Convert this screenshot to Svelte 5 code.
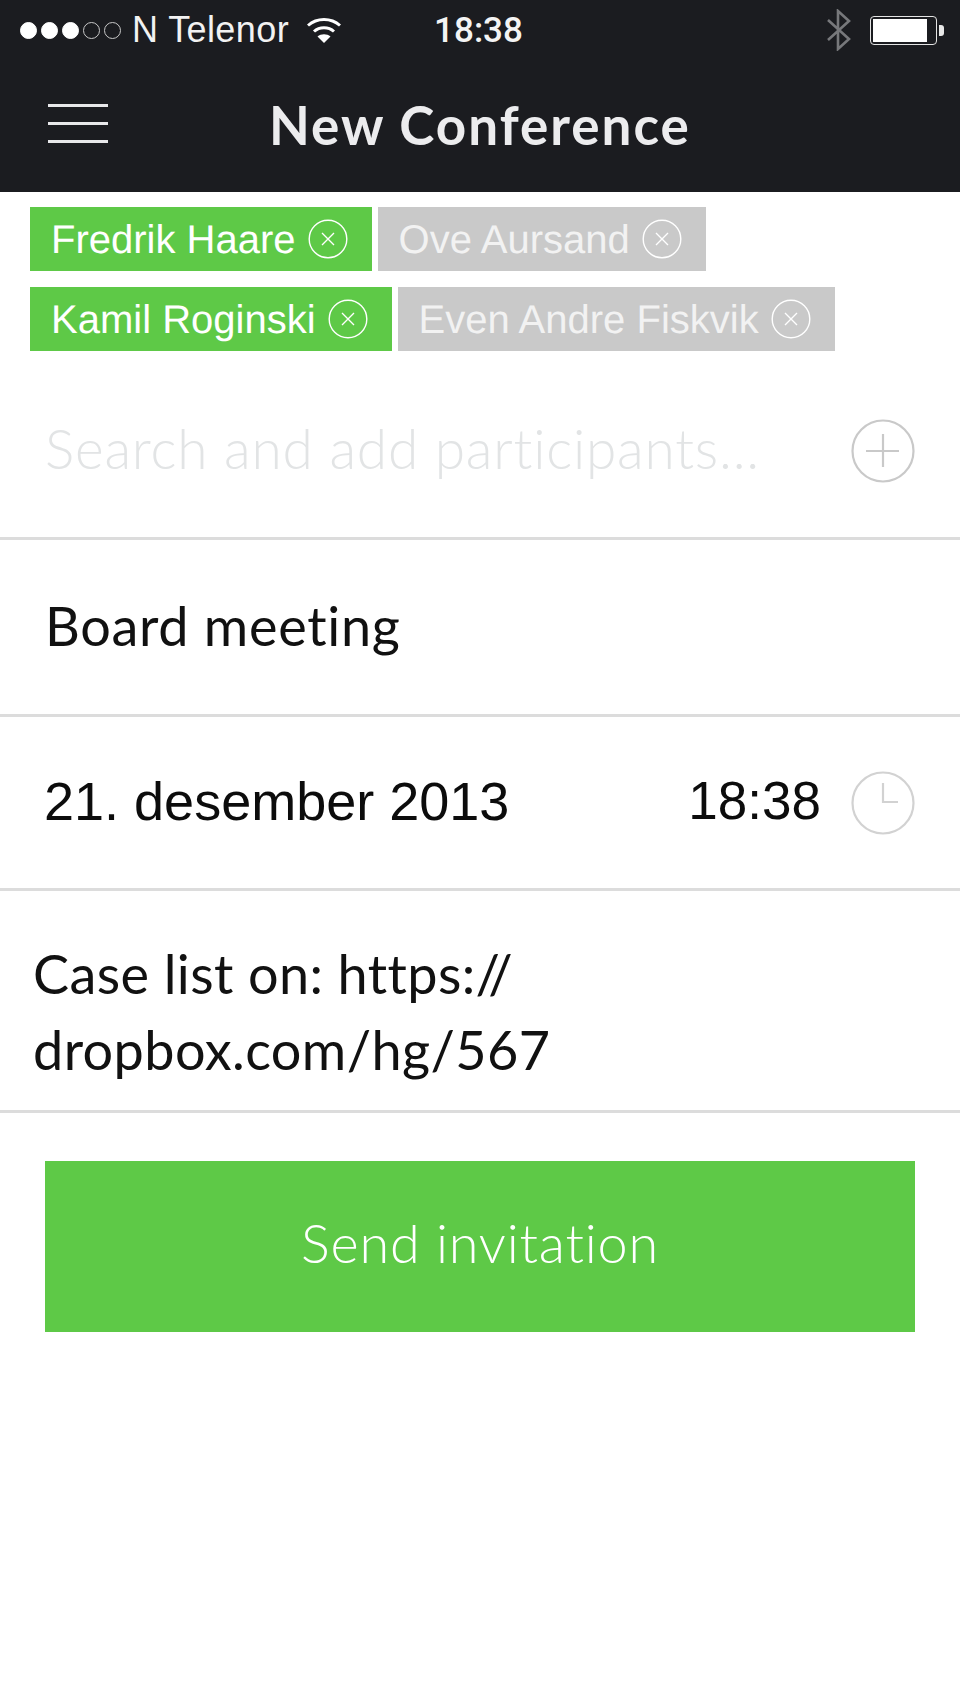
<script>
  const tags = [
    [
      { name: 'Fredrik Haare', active: true },
      { name: 'Ove Aursand', active: false }
    ],
    [
      { name: 'Kamil Roginski', active: true },
      { name: 'Even Andre Fiskvik', active: false }
    ]
  ];
  const dots = [true, true, true, false, false];
</script>

<div class="page">
  <header class="top">
    <div class="status">
      <div class="status-left">
        <span class="dots">
          {#each dots as on}
            <i class:on></i>
          {/each}
        </span>
        <span class="carrier">N Telenor</span>
        <svg class="wifi" width="36" height="28" viewBox="0 0 36 28">
          <path d="M2 9.5C11 1.5 25 1.5 34 9.5" fill="none" stroke="#fff" stroke-width="3" />
          <path d="M8 15.5C13.5 10.5 22.5 10.5 28 15.5" fill="none" stroke="#fff" stroke-width="3" />
          <path d="M18 27L11.5 20.5C15 17.5 21 17.5 24.5 20.5Z" fill="#fff" />
        </svg>
      </div>
      <span class="clock">18:38</span>
      <div class="status-right">
        <svg class="bt" width="26" height="42" viewBox="0 0 26 42">
          <path d="M2 11L23 30L12 40V2L23 12L2 31" fill="none" stroke="#77787b" stroke-width="2.6" />
        </svg>
        <div class="battery"><div class="charge"></div></div>
        <div class="nub"></div>
      </div>
    </div>
    <div class="nav">
      <div class="burger"><span></span><span></span><span></span></div>
      <h1>New Conference</h1>
    </div>
  </header>

  <div class="tags">
    {#each tags as row}
      <div class="tag-row">
        {#each row as tag}
          <div class="tag" class:active={tag.active}>
            <span>{tag.name}</span>
            <svg width="40" height="40" viewBox="0 0 40 40">
              <circle cx="20" cy="20" r="18.8" fill="none" stroke="#fff" stroke-width="1.4" />
              <path d="M14 14L26 26M26 14L14 26" fill="none" stroke="#fff" stroke-width="1.4" />
            </svg>
          </div>
        {/each}
      </div>
    {/each}
  </div>

  <div class="field search">
    <span class="placeholder">Search and add participants...</span>
    <svg class="ico" width="64" height="64" viewBox="0 0 64 64">
      <circle cx="32" cy="32" r="30.5" fill="none" stroke="#c9c9c9" stroke-width="2.2" />
      <path d="M32 15V48M15 32H48" fill="none" stroke="#c9c9c9" stroke-width="2.2" />
    </svg>
  </div>

  <div class="field subject">Board meeting</div>

  <div class="field when">
    <span class="date">21. desember 2013</span>
    <span class="time">18:38</span>
    <svg class="ico" width="64" height="64" viewBox="0 0 64 64">
      <circle cx="32" cy="32" r="30.5" fill="none" stroke="#d2d2d2" stroke-width="2.2" />
      <path d="M32 12V31H47" fill="none" stroke="#d2d2d2" stroke-width="2.2" />
    </svg>
  </div>

  <div class="field notes">Case list on: https://<br />dropbox.com/hg/567</div>

  <div class="action">
    <button>Send invitation</button>
  </div>
</div>

<style>
  :global(body) {
    background: #fff;
  }

  .page {
    width: 960px;
    height: 1704px;
    overflow: hidden;
    background: #fff;
    font-family: "Liberation Sans", Arial, sans-serif;
    font-variant-ligatures: none;
  }

  .top {
    height: 192px;
    background: #1b1c20;
    color: #fff;
  }

  .status {
    height: 60px;
    display: grid;
    grid-template-columns: 1fr auto 1fr;
    align-items: center;
    padding: 0 16px;
  }

  .status-left {
    display: flex;
    align-items: center;
  }

  .dots {
    display: flex;
    gap: 4px;
    margin: 0 11px 0 4px;
  }

  .dots i {
    width: 17px;
    height: 17px;
    box-sizing: border-box;
    border: 1px solid #c8c8c8;
    border-radius: 50%;
  }

  .dots i.on {
    background: #fff;
    border-color: #fff;
  }

  .carrier {
    font-size: 36px;
    letter-spacing: 0.4px;
    color: #f2f2f2;
  }

  .wifi {
    margin-left: 17px;
    margin-top: 0;
  }

  .clock {
    margin-right: 3px;
    font-family: Roboto, sans-serif;
    font-size: 35px;
    font-weight: 500;
    color: #f4f4f4;
  }

  .status-right {
    display: flex;
    align-items: center;
    justify-content: flex-end;
  }

  .bt {
    margin-right: 18px;
  }

  .battery {
    width: 67px;
    height: 29px;
    box-sizing: border-box;
    border: 1.5px solid #e4e4e4;
    border-radius: 4px;
    padding: 2px;
  }

  .charge {
    width: 54px;
    height: 100%;
    background: #fff;
  }

  .nub {
    width: 5px;
    height: 11px;
    margin-left: 2px;
    background: #e8e8e8;
    border-radius: 0 3px 3px 0;
  }

  .nav {
    height: 132px;
    position: relative;
    display: flex;
    align-items: center;
    justify-content: center;
    padding-bottom: 4px;
    box-sizing: border-box;
  }

  .burger {
    position: absolute;
    left: 48px;
    top: 44px;
    width: 60px;
    display: flex;
    flex-direction: column;
    gap: 15px;
  }

  .burger span {
    height: 3px;
    background: #e8e8ea;
  }

  h1 {
    margin: 0;
    font-family: Lato, sans-serif;
    font-size: 53px;
    font-weight: 700;
    letter-spacing: 2px;
    color: #ececee;
  }

  .tags {
    height: 159px;
    padding: 15px 0 0 30px;
    box-sizing: border-box;
    display: flex;
    flex-direction: column;
    gap: 16px;
  }

  .tag-row {
    display: flex;
    gap: 6px;
  }

  .tag {
    height: 64px;
    display: flex;
    align-items: center;
    gap: 12px;
    padding: 0 24px 0 21px;
    background: #c9c9c9;
    color: #f2f2f2;
    font-size: 40px;
    text-rendering: geometricPrecision;
  }

  .tag.active {
    background: #5ec947;
    color: #fff;
  }

  .tag span {
    margin-top: 2px;
  }

  .field {
    box-sizing: border-box;
    border-bottom: 3px solid #dcdcdc;
    display: flex;
    align-items: center;
  }

  .search {
    height: 189px;
    padding: 13px 45px 0 45px;
    justify-content: space-between;
  }

  .placeholder {
    margin-top: -6px;
    font-family: Lato, sans-serif;
    font-size: 55px;
    font-weight: 300;
    letter-spacing: 0.8px;
    color: #e2e4e5;
  }

  .ico {
    flex: none;
  }

  .subject {
    height: 177px;
    padding: 0 45px 4px;
    font-family: Lato, sans-serif;
    font-size: 54px;
    letter-spacing: 0.7px;
    color: #111;
  }

  .when {
    height: 174px;
    padding: 0 45px 0 44px;
    font-size: 54px;
    color: #0c0c0c;
  }

  .date {
    flex: 1;
    margin-bottom: 4px;
  }

  .time {
    margin: 0 30px 4px 0;
    font-size: 53px;
  }

  .notes {
    display: block;
    height: 222px;
    padding: 45px 33px 0;
    font-family: Lato, sans-serif;
    font-size: 54px;
    letter-spacing: 0.4px;
    line-height: 76px;
    color: #111;
  }

  .action {
    padding: 48px 45px 0;
  }

  button {
    width: 100%;
    height: 171px;
    display: block;
    padding: 0 0 8px;
    border: 0;
    background: #5ec947;
    color: #fff;
    font-family: Lato, sans-serif;
    font-size: 54px;
    font-weight: 300;
    letter-spacing: 0.8px;
  }
</style>
